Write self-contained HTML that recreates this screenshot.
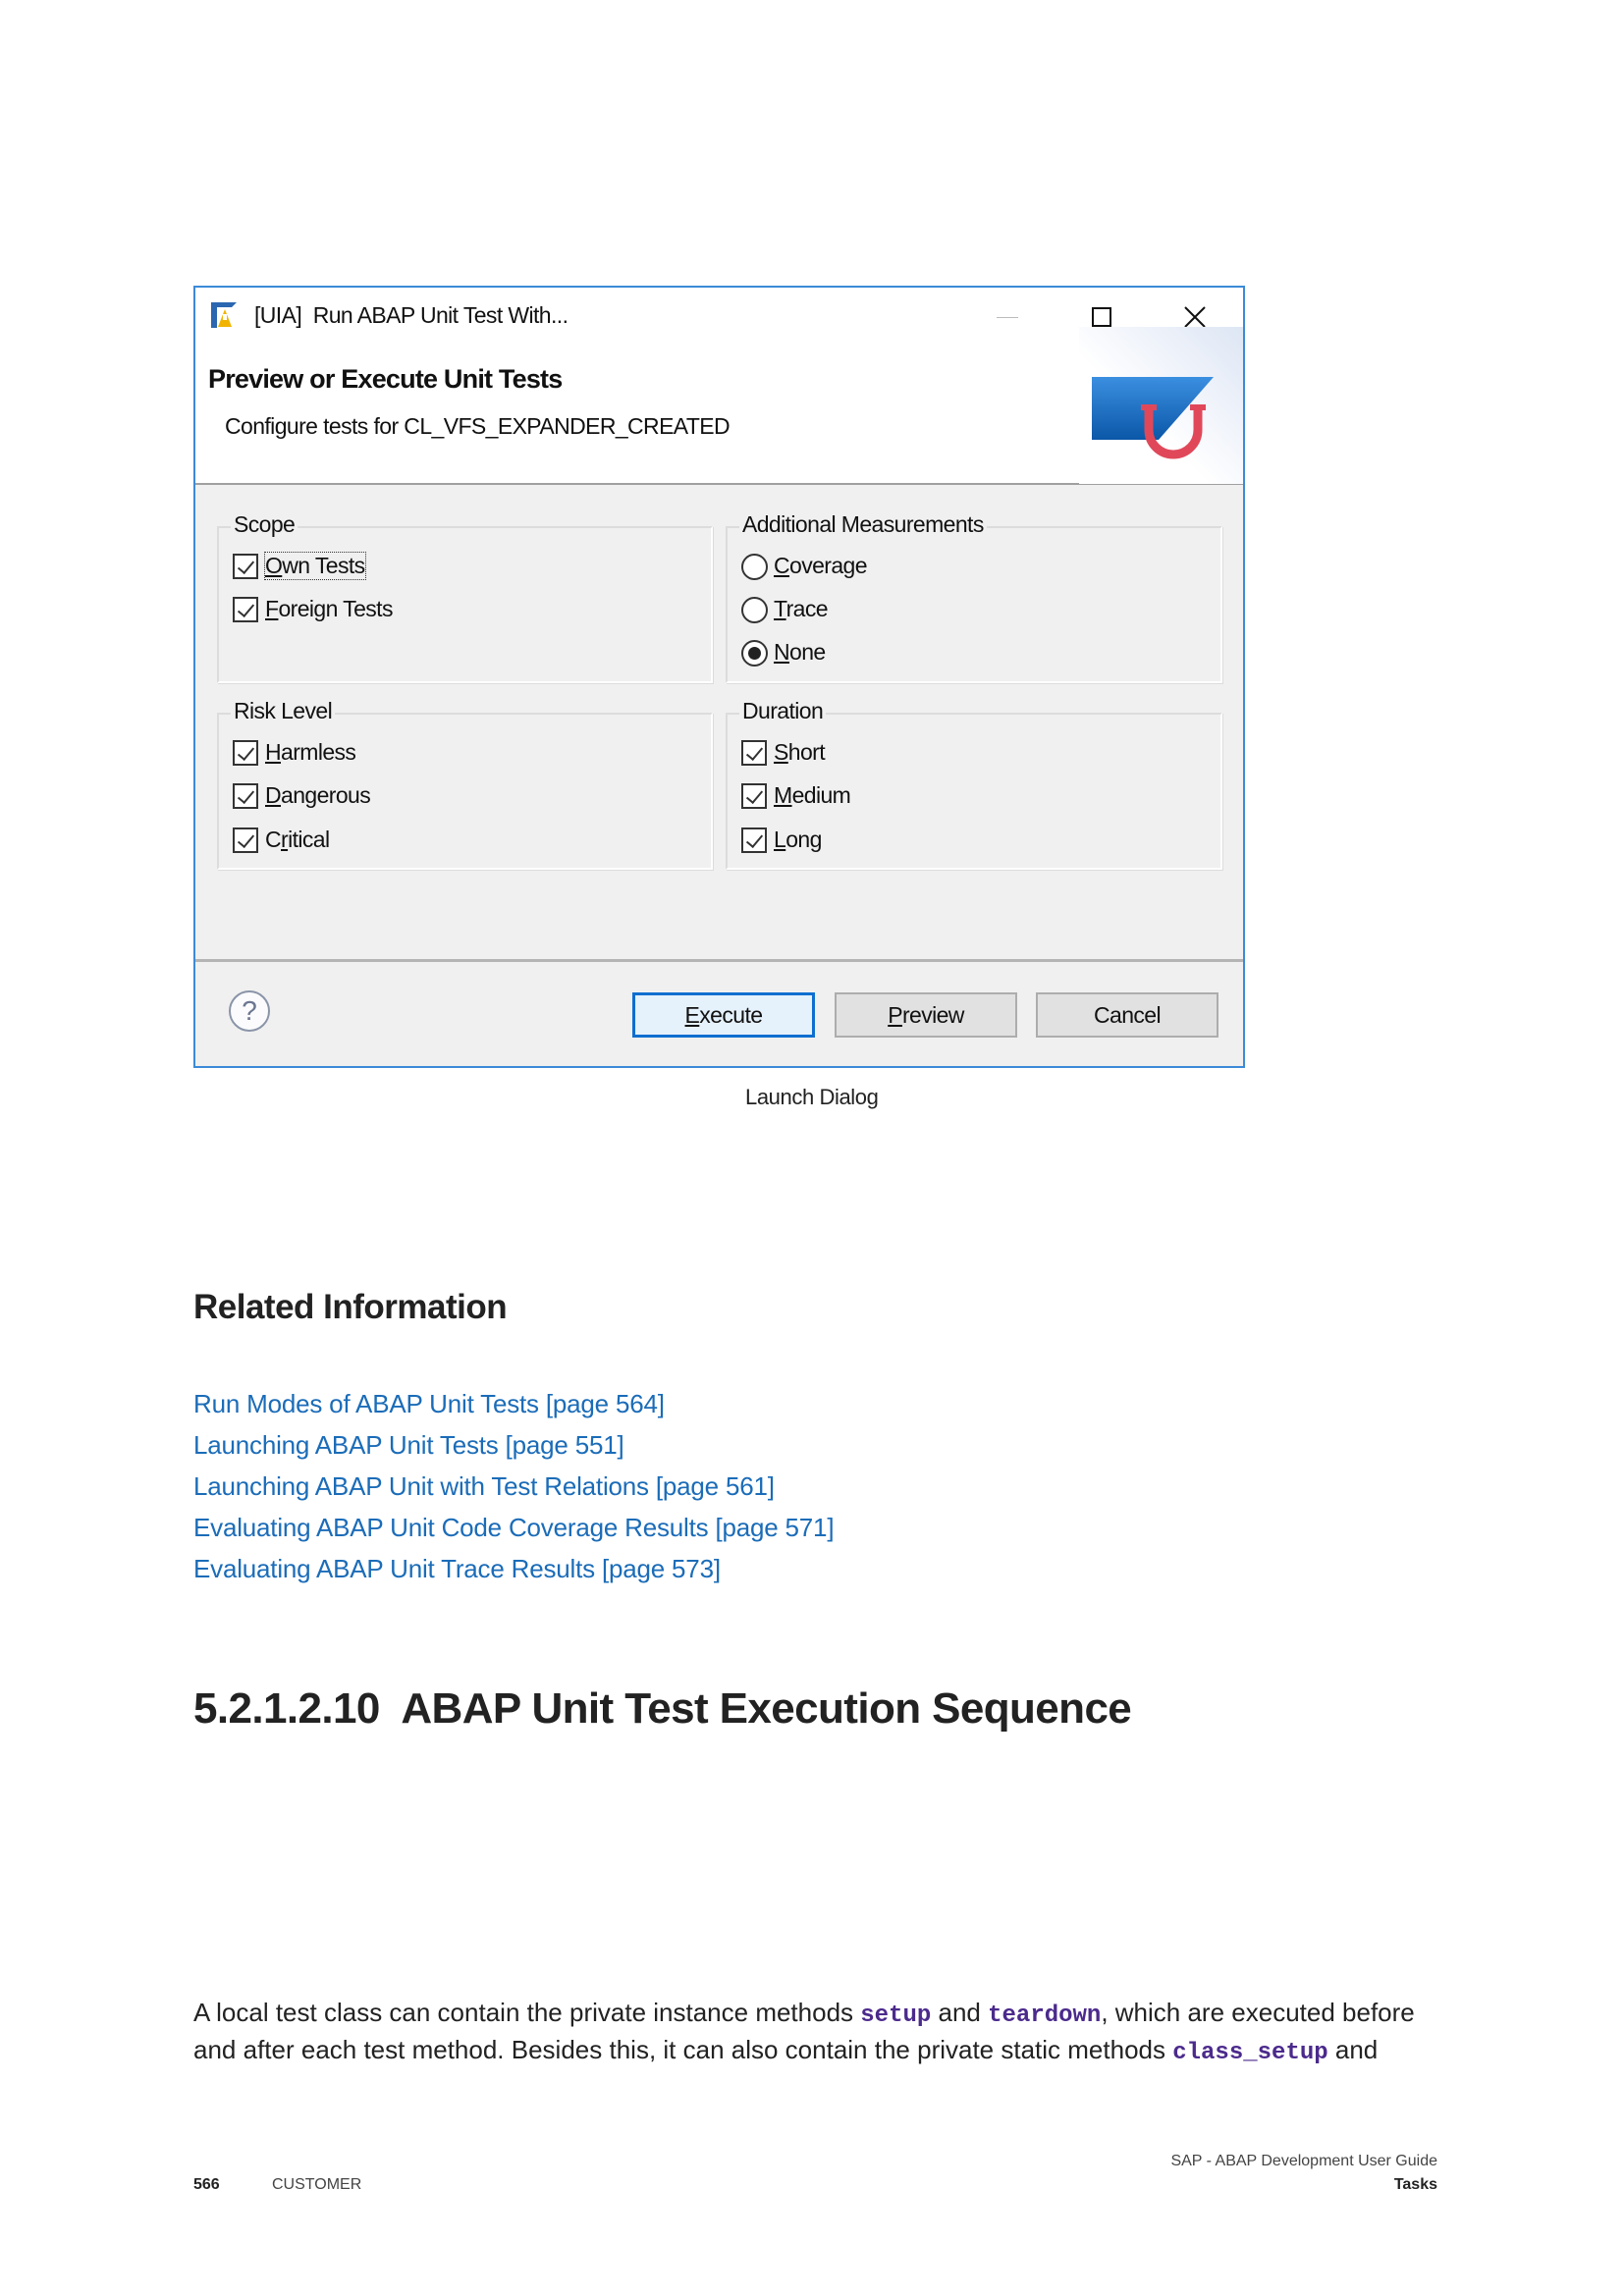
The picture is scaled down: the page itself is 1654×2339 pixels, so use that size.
<!DOCTYPE html>
<html><head><meta charset="utf-8"><style>
*{margin:0;padding:0;box-sizing:border-box}
body{width:1654px;height:2339px;background:#fff;position:relative;font-family:"Liberation Sans",sans-serif;color:#222;overflow:hidden}
.a{position:absolute;white-space:nowrap}
.dlg{position:absolute;left:197px;top:291px;width:1071px;height:797px;border:2px solid #3c8ad8;background:#f0f0f0}
.ui{font-family:"Liberation Sans",sans-serif;font-size:23px;color:#111;letter-spacing:-0.6px}
.grp{position:absolute;border:2px solid #dcdcdc;border-right-color:#fff;border-bottom-color:#fff;box-shadow:1px 1px 0 #dcdcdc}
.gl{position:absolute;background:#f0f0f0;padding:0 3px;top:-17px;left:12px}
.cb{position:absolute;width:26px;height:26px;border:2px solid #333;background:#fff}
.cb::after{content:"";position:absolute;left:7px;top:2px;width:7px;height:14px;border:solid #333;border-width:0 2px 2px 0;transform:rotate(40deg)}
.rb{position:absolute;width:27px;height:27px;border:2px solid #333;border-radius:50%;background:#fff}
.btn{position:absolute;top:718px;height:46px;width:186px;border:2px solid #adadad;background:#e1e1e1;text-align:center;line-height:42px}
.lk{color:#1b6cb8;font-size:26px;letter-spacing:-0.2px}
code{font-family:"Liberation Mono",monospace;font-weight:bold;color:#4b2a8c;font-size:24px}
</style></head><body>
<div class="dlg">
 <div style="position:absolute;left:0;top:0;width:1067px;height:201px;background:#fff;border-bottom:2px solid #a0a0a0"></div>
 <svg class="a" style="left:15px;top:13px" width="30" height="30" viewBox="0 0 30 30"><path d="M1 2h26l-5 5H7v21H1z" fill="#2b66b0"/><path d="M15 9l-7 18h14z" fill="#f0b400"/><rect x="13" y="14" width="4" height="6" fill="#fff"/></svg>
 <div class="a ui" style="left:60px;top:15px;font-size:23px">[UIA]&nbsp; Run ABAP Unit Test With...</div>
 <div class="a" style="left:816px;top:30px;width:22px;height:1px;background:#bbb"></div>
 <div class="a" style="left:913px;top:20px;width:20px;height:20px;border:2px solid #111"></div>
 <svg class="a" style="left:1006px;top:18px" width="24" height="24"><path d="M2 2L22 22M22 2L2 22" stroke="#111" stroke-width="2"/></svg>
 <div class="a ui" style="left:13px;top:78px;font-size:27px;font-weight:bold;letter-spacing:-0.8px">Preview or Execute Unit Tests</div>
 <div class="a ui" style="left:30px;top:128px;font-size:23px">Configure tests for CL_VFS_EXPANDER_CREATED</div>
 <div class="a" style="left:900px;top:40px;width:167px;height:160px;background:linear-gradient(225deg,#dde6f4 0%,#eef2fa 30%,#fff 60%)"></div>
 <svg class="a" style="left:905px;top:85px" width="140" height="100" viewBox="0 0 140 100"><defs><linearGradient id="g" x1="0" y1="0" x2="0" y2="1"><stop offset="0" stop-color="#3b8fe0"/><stop offset="1" stop-color="#0b57a8"/></linearGradient></defs><path d="M8 6H132L76 70H8z" fill="url(#g)"/><path d="M66 38v22a25 25 0 0 0 50 0V38" fill="none" stroke="#e0485a" stroke-width="9"/><path d="M58 37h16M108 37h16" stroke="#e0485a" stroke-width="6"/></svg>

 <div class="grp" style="left:22px;top:243px;width:505px;height:160px"><div class="gl ui">Scope</div></div>
 <div class="grp" style="left:540px;top:243px;width:506px;height:160px"><div class="gl ui">Additional Measurements</div></div>
 <div class="grp" style="left:22px;top:433px;width:505px;height:160px"><div class="gl ui">Risk Level</div></div>
 <div class="grp" style="left:540px;top:433px;width:506px;height:160px"><div class="gl ui">Duration</div></div>

 <div class="cb" style="left:38px;top:271px"></div><div class="a ui" style="left:71px;top:270px;outline:1px dotted #333"><u>O</u>wn Tests</div>
 <div class="cb" style="left:38px;top:315px"></div><div class="a ui" style="left:71px;top:314px"><u>F</u>oreign Tests</div>
 <div class="rb" style="left:556px;top:271px"></div><div class="a ui" style="left:589px;top:270px"><u>C</u>overage</div>
 <div class="rb" style="left:556px;top:315px"></div><div class="a ui" style="left:589px;top:314px"><u>T</u>race</div>
 <div class="rb" style="left:556px;top:359px"><div style="position:absolute;left:5px;top:5px;width:13px;height:13px;border-radius:50%;background:#222"></div></div><div class="a ui" style="left:589px;top:358px"><u>N</u>one</div>

 <div class="cb" style="left:38px;top:461px"></div><div class="a ui" style="left:71px;top:460px"><u>H</u>armless</div>
 <div class="cb" style="left:38px;top:505px"></div><div class="a ui" style="left:71px;top:504px"><u>D</u>angerous</div>
 <div class="cb" style="left:38px;top:550px"></div><div class="a ui" style="left:71px;top:549px">C<u>r</u>itical</div>
 <div class="cb" style="left:556px;top:461px"></div><div class="a ui" style="left:589px;top:460px"><u>S</u>hort</div>
 <div class="cb" style="left:556px;top:505px"></div><div class="a ui" style="left:589px;top:504px"><u>M</u>edium</div>
 <div class="cb" style="left:556px;top:550px"></div><div class="a ui" style="left:589px;top:549px"><u>L</u>ong</div>

 <div class="a" style="left:0;top:684px;width:1067px;height:3px;background:#b4b4b4"></div>
 <div class="a" style="left:34px;top:716px;width:42px;height:42px;border:2px solid #8a94a8;border-radius:50%;text-align:center;line-height:38px;font-size:28px;color:#6b7690;background:#fbfbfd">?</div>
 <div class="btn ui" style="left:445px;border:3px solid #0f6fd0;background:#e5f1fb;line-height:40px"><u>E</u>xecute</div>
 <div class="btn ui" style="left:651px"><u>P</u>review</div>
 <div class="btn ui" style="left:856px">Cancel</div>
</div>
<div class="a" style="left:759px;top:1105px;font-size:22px;letter-spacing:-0.4px">Launch Dialog</div>

<div class="a" style="left:197px;top:1312px;font-size:35px;font-weight:bold;letter-spacing:-0.5px">Related Information</div>
<div class="a lk" style="left:197px;top:1415px">Run Modes of ABAP Unit Tests [page 564]</div>
<div class="a lk" style="left:197px;top:1457px">Launching ABAP Unit Tests [page 551]</div>
<div class="a lk" style="left:197px;top:1499px">Launching ABAP Unit with Test Relations [page 561]</div>
<div class="a lk" style="left:197px;top:1541px">Evaluating ABAP Unit Code Coverage Results [page 571]</div>
<div class="a lk" style="left:197px;top:1583px">Evaluating ABAP Unit Trace Results [page 573]</div>

<div class="a" style="left:197px;top:1716px;font-size:44px;font-weight:bold;letter-spacing:-0.6px">5.2.1.2.10&nbsp; ABAP Unit Test Execution Sequence</div>

<div class="a" style="left:197px;top:2035px;font-size:26px;letter-spacing:0">A local test class can contain the private instance methods <code>setup</code> and <code>teardown</code>, which are executed before</div>
<div class="a" style="left:197px;top:2073px;font-size:26px;letter-spacing:0">and after each test method. Besides this, it can also contain the private static methods <code>class_setup</code> and</div>

<div class="a" style="left:197px;top:2217px;font-size:16px;font-weight:bold">566</div>
<div class="a" style="left:277px;top:2217px;font-size:16px;color:#444">CUSTOMER</div>
<div class="a" style="right:190px;top:2193px;font-size:16px;color:#444;text-align:right">SAP - ABAP Development User Guide</div>
<div class="a" style="right:190px;top:2217px;font-size:16px;font-weight:bold">Tasks</div>
</body></html>
